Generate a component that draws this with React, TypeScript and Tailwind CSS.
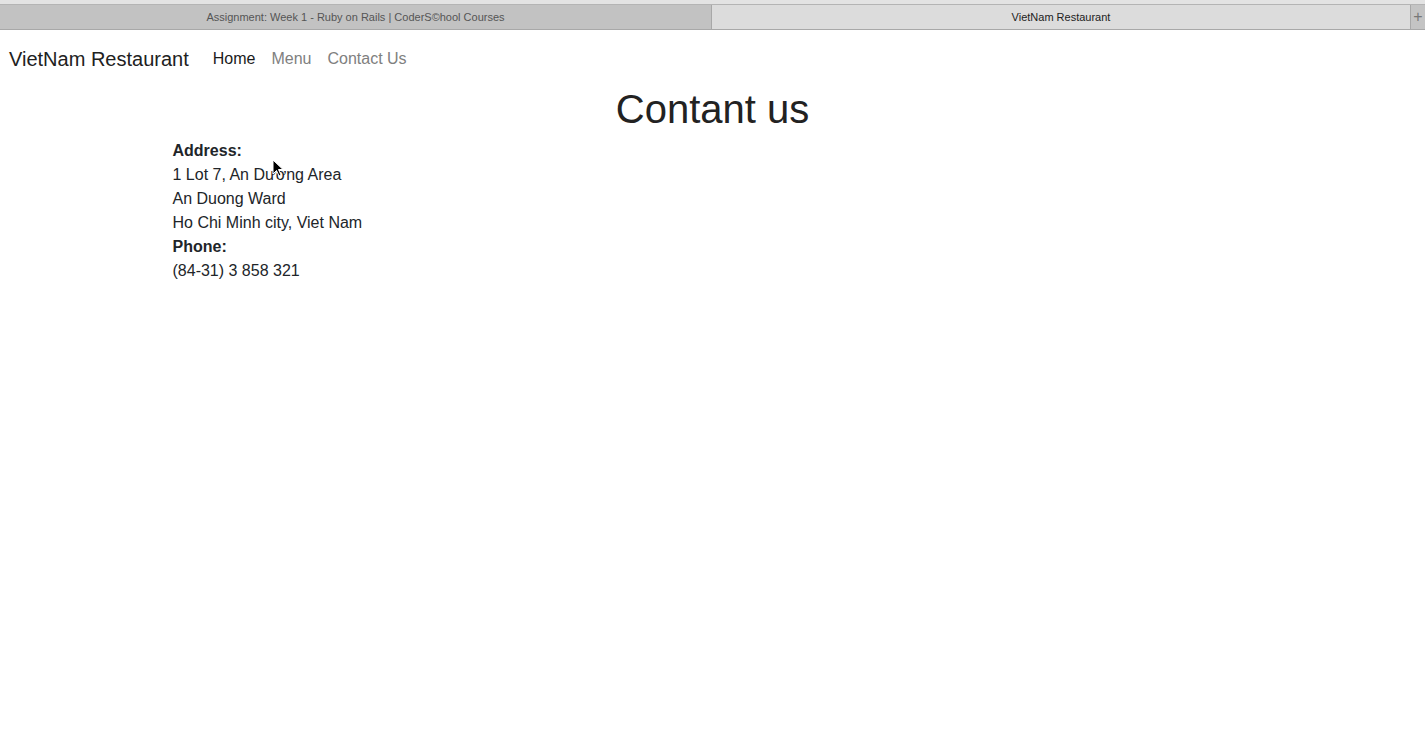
import React from "react";

const font = { fontFamily: '"Liberation Sans", Arial, sans-serif' };

function TabBar() {
  return (
    <div className="h-[30px] bg-[#e3e3e3] flex flex-col">
      <div className="h-[7px] border-b border-[#b4b4b4]" />
      <div className="flex-1 flex border-b border-[#a8a8a8] text-[11px]">
        <div className="w-[712px] bg-[#c2c2c2] flex items-center justify-center pt-[1px] text-[#555] border-r border-[#a8a8a8]">
          Assignment: Week 1 - Ruby on Rails | CoderS©hool Courses
        </div>
        <div className="flex-1 bg-[#dcdcdc] flex items-center justify-center pt-[1px] text-[#222]">VietNam Restaurant</div>
        <div className="w-[15px] bg-[#c4c4c4] border-l border-[#a8a8a8] flex items-center justify-center text-[#777] text-[16px] font-light">+</div>
      </div>
    </div>
  );
}

function Cursor() {
  return (
    <svg className="absolute left-[272px] top-[159px]" width="12" height="18" viewBox="0 0 12 18">
      <path d="M1 1 L1 15 L4.5 11.5 L7 17 L9 16 L6.5 10.5 L11 10.5 Z" fill="#000" stroke="#fff" strokeWidth="1" />
    </svg>
  );
}

export default function App() {
  return (
    <div className="relative min-h-[744px] bg-white text-[#212529]" style={font}>
      <TabBar />
      <nav className="flex items-center px-[9px] pt-[1px] h-[57px]">
        <span className="text-[20px] text-[#212121] mr-[16px]">VietNam Restaurant</span>
        <a className="text-[16px] text-[#1a1a1a] px-[8px]">Home</a>
        <a className="text-[16px] text-[#808080] px-[8px]">Menu</a>
        <a className="text-[16px] text-[#808080] px-[8px]">Contact Us</a>
      </nav>
      <div className="mx-auto w-[1080px]">
        <h1 className="text-[40px] leading-[48px] text-center text-[#222] mb-[6px] -mt-[2px]">Contant us</h1>
        <div className="text-[16px] leading-[24px]">
          <div className="font-bold">Address:</div>
          <div>1 Lot 7, An Dương Area</div>
          <div>An Duong Ward</div>
          <div>Ho Chi Minh city, Viet Nam</div>
          <div className="font-bold">Phone:</div>
          <div>(84-31) 3 858 321</div>
        </div>
      </div>
      <Cursor />
    </div>
  );
}
